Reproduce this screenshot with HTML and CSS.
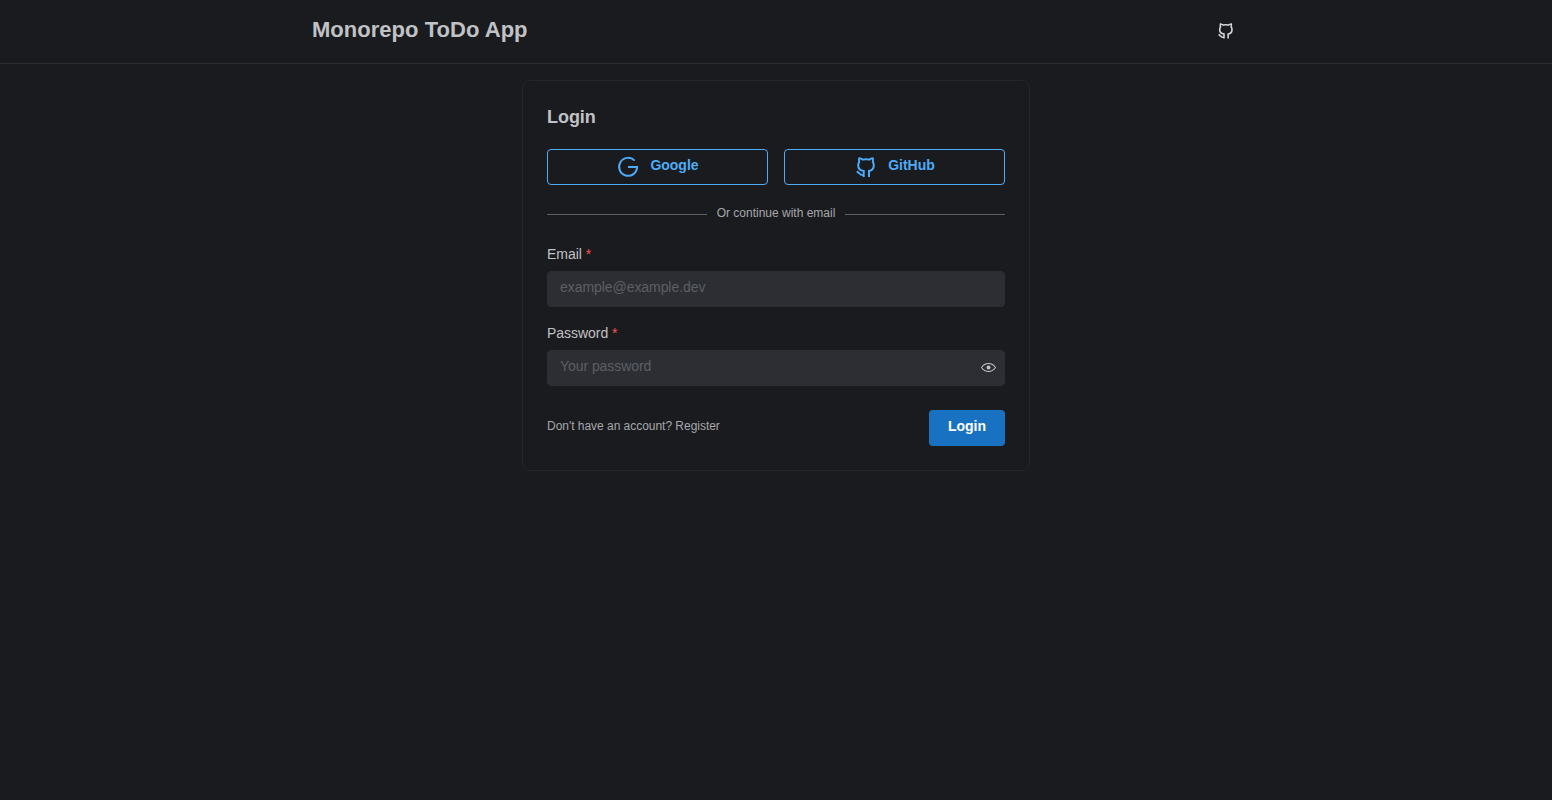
FILE: index.html
```html
<!DOCTYPE html>
<html lang="en">
<head>
<meta charset="utf-8">
<title>Monorepo ToDo App</title>
<link rel="stylesheet" href="styles.css">
</head>
<body>
<header class="header">
  <div class="header-inner">
    <h1 class="brand">Monorepo ToDo App</h1>
    <a class="repo" href="#" aria-label="GitHub"><svg class="icon icon-sm" viewBox="0 0 20 20"><path d="M7.500 19.500v-5.600C4.300 13.500 2.100 11.500 2.100 8.200c0-1.300.4-2.300 1-3.200C2.700 3.700 2.800 2.500 3.200 1.200c1.300.1 2.300.6 3.400 1.400 2-.5 4.400-.5 6.400 0 1.100-.8 2.100-1.300 3.400-1.400.4 1.300.5 2.500.1 3.800.6.900 1 1.900 1 3.200 0 3.300-2 5.300-4.800 5.700v5.600M7.500 18c-4 .5-4-2.500-6.800-3.600"/></svg></a>
  </div>
</header>
<main class="card">
  <h2 class="title">Login</h2>
  <div class="providers">
    <button class="provider" type="button"><svg class="icon" viewBox="0 0 20 20"><path d="M16.600 3.600A9 9 0 1 0 19.100 10H10"/></svg><span>Google</span></button>
    <button class="provider" type="button"><svg class="icon" viewBox="0 0 20 20"><path d="M7.700 20v-6.100C4.400 13.500 2.200 11.500 2.200 8.200c0-1.300.4-2.300 1-3.200C2.800 3.700 2.900 2.500 3.300 1.200c1.300.1 2.300.6 3.400 1.400 2-.5 4.600-.5 6.600 0 1.100-.8 2.100-1.300 3.400-1.400.4 1.300.5 2.500.1 3.800.6.900 1 1.900 1 3.200 0 3.300-2 5.300-4.800 5.700V20M7.700 18.200c-4 .5-4-2.500-7-3.700"/></svg><span>GitHub</span></button>
  </div>
  <div class="divider"><span>Or continue with email</span></div>
  <form class="form">
    <div class="field">
      <label class="label" for="email">Email <span class="required">*</span></label>
      <div class="control"><input class="input" id="email" type="email" placeholder="example@example.dev"></div>
    </div>
    <div class="field">
      <label class="label" for="password">Password <span class="required">*</span></label>
      <div class="control"><input class="input" id="password" type="password" placeholder="Your password"><svg class="eye" viewBox="0 0 15 15"><path fill-rule="evenodd" d="M7.5 11C4.8 11 2.6 9.7 1.1 7.5 2.6 5.3 4.8 4 7.5 4s4.900 1.300 6.400 3.500C12.400 9.700 10.200 11 7.500 11Zm0 1c3.200 0 5.800-1.600 7.400-4.200a.5.500 0 0 0 0-.6C13.300 4.600 10.700 3 7.500 3S1.700 4.600.1 7.200a.5.500 0 0 0 0 .6C1.700 10.400 4.300 12 7.500 12Zm0-2.500a2 2 0 1 0 0-4 2 2 0 0 0 0 4Z"/></svg></div>
    </div>
    <div class="actions">
      <a class="register" href="#">Don't have an account? Register</a>
      <button class="submit" type="button"><span>Login</span></button>
    </div>
  </form>
</main>
</body>
</html>
```
FILE: styles.css
```css
* { box-sizing: border-box; }
body { margin: 0; background: #1a1b1e; color: #c1c2c5; font: 14px/1.55 "Liberation Sans", Arial, sans-serif; }
button, input { font: inherit; }
a { color: inherit; text-decoration: none; }
svg { display: block; flex: none; }
.header { height: 64px; border-bottom: 1px solid #2c2e33; }
.header-inner { width: 928px; height: 63px; margin: 0 auto; display: flex; justify-content: space-between; align-items: center; padding-right: 6px; }
.brand { margin: 0 0 4px; font-size: 22px; line-height: 30px; letter-spacing: 0.03px; }
.repo { padding-bottom: 2px; }
.card { width: 508px; height: 391px; margin: 16px auto 0; padding: 24px; border: 1px solid #25262b; border-radius: 8px; }
.title { margin: 0; height: 44px; font-size: 18px; line-height: 24px; letter-spacing: -0.05px; }
.providers { display: grid; grid-template-columns: 1fr 1fr; gap: 16px; }
.provider { height: 36px; padding: 0 0 0 2px; display: flex; align-items: center; justify-content: center; gap: 12px; border: 1px solid #4dabf7; border-radius: 4px; background: transparent; color: #4dabf7; font-weight: 700; }
.provider span { padding-bottom: 3px; }
.icon { width: 20px; height: 20px; fill: none; stroke: currentColor; stroke-width: 2; overflow: visible; }
.icon-sm { width: 16px; height: 16px; color: #d5d7da; }
.divider { display: flex; align-items: center; gap: 10px; margin-top: 20px; height: 19px; font-size: 12px; color: #a6a7ab; }
.divider span { padding-bottom: 2px; }
.divider::before, .divider::after { content: ""; flex: 1; height: 1px; background: #5c5f66; }
.form { margin-top: 20px; }
.field { height: 79px; }
.label { display: block; height: 27px; line-height: 20px; letter-spacing: -0.03px; }
.required { color: #fa5252; }
.control { position: relative; }
.input { display: block; width: 100%; height: 36px; padding: 0 12px 5px; border: 1px solid #2c2e33; border-radius: 4px; background: #2c2e33; color: #c1c2c5; letter-spacing: -0.06px; }
.input::placeholder { color: #5c5f66; opacity: 1; }
.eye { position: absolute; right: 9px; top: 10px; width: 15px; height: 15px; fill: #c1c2c5; }
.actions { display: flex; align-items: center; justify-content: space-between; margin-top: 8px; }
.register { font-size: 12px; padding-bottom: 3px; color: #a6a7ab; letter-spacing: -0.03px; }
.submit { width: 76px; height: 36px; padding: 0 0 2px; border: 0; border-radius: 4px; background: #1971c2; color: #fff; font-weight: 700; }
```
